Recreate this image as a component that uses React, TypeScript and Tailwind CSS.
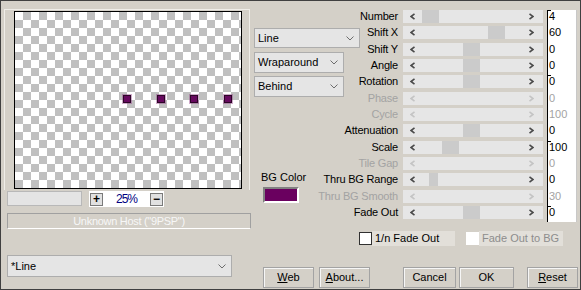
import type { ReactNode } from "react";

type Row = { label: string; value: string; off?: boolean; thumb?: number; thumbW?: number; first?: boolean };

const rows: Row[] = [
  { label: "Number", value: "4", thumb: 19, first: true },
  { label: "Shift X", value: "60", thumb: 85 },
  { label: "Shift Y", value: "0", thumb: 60 },
  { label: "Angle", value: "0", thumb: 60 },
  { label: "Rotation", value: "0", thumb: 60, first: true },
  { label: "Phase", value: "0", off: true },
  { label: "Cycle", value: "100", off: true },
  { label: "Attenuation", value: "0", thumb: 60 },
  { label: "Scale", value: "100", thumb: 39, first: true },
  { label: "Tile Gap", value: "0", off: true },
  { label: "Thru BG Range", value: "0", thumb: 26, thumbW: 9 },
  { label: "Thru BG Smooth", value: "30", off: true },
  { label: "Fade Out", value: "0", thumb: 60, first: true },
];

function Chevron() {
  return (
    <svg width="8" height="5" viewBox="0 0 8 5" className="shrink-0">
      <path d="M0.5 0.5 L4 4 L7.5 0.5" fill="none" stroke="#6d6d6d" strokeWidth="1" />
    </svg>
  );
}

function Arrow({ dir, off }: { dir: "l" | "r"; off?: boolean }) {
  const d = dir === "l" ? "M4.5 0.8 L1 3.5 L4.5 6.2" : "M0.5 0.8 L4 3.5 L0.5 6.2";
  return (
    <svg width="5" height="7" viewBox="0 0 5 7" className="shrink-0">
      <path d={d} fill="none" stroke={off ? "#c4c4c4" : "#4a4a4a"} strokeWidth="1.6" />
    </svg>
  );
}

function Combo({ text, className }: { text: string; className: string }) {
  return (
    <div className={`flex items-center justify-between bg-[#e5e5e5] border border-[#adadad] pl-[3px] pr-[5px] ${className}`}>
      <span>{text}</span>
      <Chevron />
    </div>
  );
}

function Button({ className, children }: { className: string; children: ReactNode }) {
  return (
    <div className={`h-[21px] flex items-center justify-center border border-[#a3a3a3] shadow-[inset_1px_1px_0_#f6f6f6] ${className}`}>
      {children}
    </div>
  );
}

function LeftPane() {
  const dots = [108, 142, 175, 209];
  return (
    <div className="w-[249px] shrink-0 flex flex-col">
      <div className="ml-[3px] mt-[8px] w-[246px] h-[181px] border-t border-l border-r border-[#efede8] pl-[9px] pt-[1px]">
        <div className="relative w-[228px] h-[178px] border border-black bg-[conic-gradient(#c0c0c0_25%,#fff_0_50%,#c0c0c0_0_75%,#fff_0)] bg-[length:16px_16px]">
          {dots.map((x) => (
            <div
              key={x}
              className="absolute top-[83px] w-[8px] h-[8px] bg-[#670a5f] border border-[#2d0628] shadow-[0_0_0_1px_rgba(150,70,140,0.45)]"
              style={{ left: x }}
            />
          ))}
        </div>
      </div>
      <div className="mt-[1px] ml-[6px] flex gap-[7px]">
        <div className="w-[75px] h-[15px] bg-[#e4e4e4] border border-[#b8b8b8]" />
        <div className="w-[75px] h-[16px] bg-white flex items-center justify-between px-[1px]">
          <div className="w-[13px] h-[13px] bg-[#e1e1e1] border border-[#7a7a7a] flex items-center justify-center font-bold text-[12px] leading-none">
            +
          </div>
          <span className="text-[#000080] text-[12px] tracking-[-1px]">25%</span>
          <div className="w-[13px] h-[13px] bg-[#e1e1e1] border border-[#7a7a7a] flex items-center justify-center font-bold text-[12px] leading-none">
            −
          </div>
        </div>
      </div>
      <div className="mt-[6px] ml-[6px] w-[244px] h-[16px] border-t border-l border-r border-[#a0a0a0] border-b border-b-white flex items-center justify-center text-[#f7f7f7] tracking-[-0.3px]">
        Unknown Host ("9PSP")
      </div>
      <Combo text="*Line" className="mt-[26px] ml-[6px] w-[225px] h-[22px]" />
    </div>
  );
}

function SliderRow({ r }: { r: Row }) {
  return (
    <div className="flex items-start h-[16.33px]">
      <div className={`w-[38px] h-[13px] flex justify-end whitespace-nowrap tracking-[-0.2px] ${r.off ? "text-[#a3a3a3]" : "text-black"}`}>
        {r.label}
      </div>
      <div className="relative ml-[5px] w-[140px] h-[13px] bg-[#e6e6e6] flex items-center justify-between pl-[7px] pr-[9px]">
        <Arrow dir="l" off={r.off} />
        {r.thumb !== undefined && (
          <div className="absolute top-0 h-[13px] bg-[#cbcbcb]" style={{ left: r.thumb, width: r.thumbW ?? 17 }} />
        )}
        <Arrow dir="r" off={r.off} />
      </div>
      <div className={`relative ml-[4px] w-[30px] self-stretch bg-white border-l border-black border-r border-r-[#c8c8c8] pl-[1px] ${r.off ? "text-[#a3a3a3]" : "text-black"}`}>
        {r.first && <span className="absolute top-0 left-0 w-[3px] h-px bg-black" />}
        {r.value}
      </div>
    </div>
  );
}

function RightPane() {
  return (
    <div className="flex-1 flex flex-col">
      <div className="flex">
        <div className="w-[110px] shrink-0 pl-[4px] pt-[27px] flex flex-col">
          <Combo text="Line" className="w-[106px] h-[20px]" />
          <Combo text="Wraparound" className="mt-[4px] w-[90px] h-[21px]" />
          <Combo text="Behind" className="mt-[3px] w-[90px] h-[21px]" />
          <div className="mt-[74px] pl-[7px]">BG Color</div>
          <div className="mt-[3px] ml-[9px] w-[36px] h-[16px] border-2 border-t-[#808080] border-l-[#808080] border-b-white border-r-white bg-[#6a005f]" />
        </div>
        <div className="pt-[9px] flex flex-col">
          {rows.map((r) => (
            <SliderRow key={r.label} r={r} />
          ))}
        </div>
      </div>
      <div className="mt-[8px] h-[16px] flex items-center pl-[109px]">
        <div className="w-[13px] h-[13px] bg-white border border-[#303030]" />
        <div className="w-[83px] h-[15px] bg-[#e2dfd9] pl-[3px] flex items-center">1/n Fade Out</div>
        <div className="ml-[11px] w-[13px] h-[13px] bg-white" />
        <div className="w-[84px] h-[15px] bg-[#e2dfd9] pl-[3px] flex items-center text-[#8d8d8d]">Fade Out to BG</div>
      </div>
      <div className="mt-[21px] flex pl-[13px]">
        <Button className="w-[51px]">
          <span><u>W</u>eb</span>
        </Button>
        <Button className="ml-[5px] w-[51px]">
          <span><u>A</u>bout...</span>
        </Button>
        <Button className="ml-[33px] w-[53px]">Cancel</Button>
        <Button className="ml-[3px] w-[55px]">OK</Button>
        <Button className="ml-[13px] w-[51px]">
          <span><u>R</u>eset</span>
        </Button>
      </div>
    </div>
  );
}

export default function App() {
  return (
    <div className="w-[581px] h-[290px] border border-[#404040] bg-[#d4d0c8] flex overflow-hidden font-['Liberation_Sans',Arial,sans-serif] text-[11px] leading-[13px] text-black">
      <LeftPane />
      <RightPane />
    </div>
  );
}
